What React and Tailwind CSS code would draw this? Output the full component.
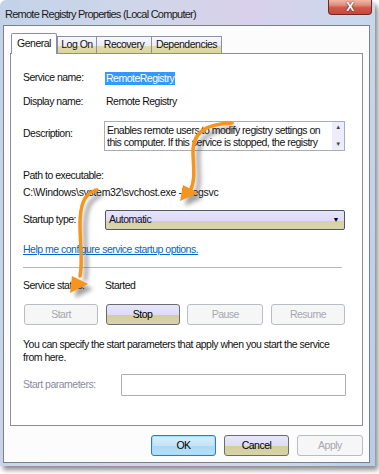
import React from 'react';

// Vista style push button
const Btn = ({ children, kind = 'normal', className = '' }) => {
  const styles = {
    disabled: 'border-[#b8bcc4] bg-[#f6f6f6] text-[#a6a6b0]',
    normal:
      'border-[#6a6a70] text-black bg-[linear-gradient(to_bottom,#e6e6fb_0%,#dcdcf7_52%,#d2ce9f_53%,#d8d4a8_100%)]',
    default:
      'border-[#3a78b0] text-black bg-[linear-gradient(to_bottom,#d8effc_0%,#c2e4f8_50%,#acd8f4_51%,#b8e0f6_100%)] shadow-[inset_0_0_0_1px_#9fe0ff]',
  };
  return (
    <div
      className={`h-[21px] flex items-center justify-center rounded-[3px] border ${styles[kind]} ${className}`}
    >
      {children}
    </div>
  );
};

const Tab = ({ children, selected, className = '' }) =>
  selected ? (
    <div
      className={`h-[21px] -mb-px relative z-10 flex items-center justify-center bg-white border border-b-0 border-[#8c8e9c] rounded-t-[2px] ${className}`}
    >
      {children}
    </div>
  ) : (
    <div
      className={`h-[17px] flex items-center justify-center border border-b-0 border-[#8e90a0] bg-[linear-gradient(to_bottom,#f7f7fd_0%,#ececf6_55%,#e2dbaa_56%,#dcd5a0_100%)] ${className}`}
    >
      {children}
    </div>
  );

const Label = ({ children, className = '' }) => (
  <div className={`w-[82px] shrink-0 ${className}`}>{children}</div>
);

const Arrows = () => (
  <svg
    className="absolute inset-0 pointer-events-none"
    width="379"
    height="474"
    viewBox="0 0 379 474"
  >
    <defs>
      <filter id="blur" x="-20%" y="-20%" width="140%" height="140%">
        <feGaussianBlur stdDeviation="2" />
      </filter>
    </defs>
    {/* shadows */}
    <g opacity="0.45" filter="url(#blur)" transform="translate(5 5)">
      <path d="M232 123 C 205 124, 192 132, 193 155 C 194 172, 195 182, 190 191" stroke="#333" strokeWidth="4" fill="none" />
      <path d="M180 201 L 183 185 L 198 193 Z" fill="#333" />
      <path d="M97 190 C 84 193, 80 205, 80 225 C 80 245, 83 262, 80 276" stroke="#333" strokeWidth="4" fill="none" />
      <path d="M70 293 L 72 276 L 88 284 Z" fill="#333" />
    </g>
    {/* arrows */}
    <g>
      <path d="M232 123 C 205 124, 192 132, 193 155 C 194 172, 195 182, 190 191" stroke="#f7941d" strokeWidth="3.5" fill="none" strokeLinecap="round" />
      <path d="M180 201 L 183 185 L 198 193 Z" fill="#f7941d" />
      <path d="M97 190 C 84 193, 80 205, 80 225 C 80 245, 83 262, 80 276" stroke="#f7941d" strokeWidth="3.5" fill="none" strokeLinecap="round" />
      <path d="M70 293 L 72 276 L 88 284 Z" fill="#f7941d" />
    </g>
  </svg>
);

const App = () => {
  return (
    <div
      className="w-[379px] h-[474px] bg-white relative overflow-hidden text-[10.5px] tracking-[-0.5px] text-[#111]"
      style={{ fontFamily: '"Liberation Sans", Arial, sans-serif' }}
    >
      {/* Window frame */}
      <div className="w-[375px] h-[466px] flex flex-col pl-[3px] pr-[5px] pb-[3px] rounded-t-[6px] bg-[linear-gradient(100deg,#c3d2e8_0%,#cfd6ea_30%,#d8d0ea_55%,#c9d8ec_80%,#b8cce8_100%)] shadow-[3px_4px_5px_rgba(0,0,0,0.45)]">
        {/* Title bar */}
        <div className="h-[25px] flex items-start justify-between">
          <div className="pt-[6px] pl-[2px] text-[11px] tracking-[-0.75px] text-[#1a1a1a]">
            Remote Registry Properties (Local Computer)
          </div>
          <div className="mr-[-2px] w-[44px] h-[15px] flex items-center justify-center rounded-b-[4px] border border-t-0 border-[#6b2a22] bg-[linear-gradient(to_bottom,#f0b8a8_0%,#e09080_35%,#d05848_55%,#c84a3c_100%)]">
            <span className="text-white font-bold text-[12px] leading-none [text-shadow:0_0_2px_#401010]">
              X
            </span>
          </div>
        </div>

        {/* Body */}
        <div className="flex-1 flex flex-col border border-[#78828e] bg-[#fcfcfd]">
          {/* Tabs */}
          <div className="flex items-end pl-[7px] pt-[7px]">
            <Tab selected className="w-[46px]">General</Tab>
            <Tab className="w-[40px]">Log On</Tab>
            <Tab className="w-[55px] border-l-0">Recovery</Tab>
            <Tab className="w-[70px] border-l-0">Dependencies</Tab>
          </div>

          {/* Tab panel */}
          <div className="ml-[6px] w-[353px] h-[373px] border border-[#8c8e9c] bg-white flex flex-col pl-[12px] pr-[16px] pt-[16px]">
            <div className="h-[16px] flex items-center">
              <Label>Service name:</Label>
              <span className="bg-[#3399ff] text-white px-[1px] leading-[13px]">RemoteRegistry</span>
            </div>
            <div className="h-[16px] mt-[8px] flex items-center">
              <Label>Display name:</Label>
              <span className="pl-[1px]">Remote Registry</span>
            </div>
            <div className="mt-[11px] flex items-start">
              <Label className="pt-[5px]">Description:</Label>
              <div className="ml-[-1px] w-[241px] h-[30px] border border-[#a9abb8] flex overflow-hidden">
                <div className="flex-1 pl-[2px] pt-[2px] leading-[12px] overflow-hidden">
                  Enables remote users to modify registry settings on this computer. If this service is stopped, the registry
                </div>
                <div className="w-[12px] flex flex-col items-center justify-between bg-[#ececfa] text-[6px] text-[#444] py-[1px]">
                  <span>▲</span>
                  <span>▼</span>
                </div>
              </div>
            </div>
            <div className="mt-[16px] leading-[17px]">
              <div>Path to executable:</div>
              <div className="tracking-[-0.3px]">C:\Windows\system32\svchost.exe -k regsvc</div>
            </div>
            <div className="mt-[9px] flex items-center">
              <Label>Startup type:</Label>
              <div className="w-[240px] h-[20px] rounded-[2px] border border-[#55565c] flex items-center justify-between pl-[3px] pr-[5px] bg-[linear-gradient(to_bottom,#e6e4fb_0%,#dcdaf8_55%,#d6d2a8_56%,#d8d4ac_100%)]">
                <span>Automatic</span>
                <span className="text-[7px] text-black">▼</span>
              </div>
            </div>
            <div className="mt-[13px] h-[14px] flex items-center">
              <span className="text-[#0066cc] underline">Help me configure service startup options.</span>
            </div>
            <div className="mt-[10px] h-px w-[319px] bg-[#b4b6c6]" />
            <div className="mt-[11px] h-[14px] flex items-center">
              <Label>Service status:</Label>
              <span>Started</span>
            </div>
            <div className="mt-[11px] w-[321px] ml-[1px] flex justify-between">
              <Btn kind="disabled" className="w-[74px]">Start</Btn>
              <Btn className="w-[74px]">Stop</Btn>
              <Btn kind="disabled" className="w-[76px]">Pause</Btn>
              <Btn kind="disabled" className="w-[74px]">Resume</Btn>
            </div>
            <div className="mt-[13px] leading-[12.5px] w-[322px]">
              You can specify the start parameters that apply when you start the service from here.
            </div>
            <div className="mt-[11px] flex items-center">
              <div className="w-[98px] shrink-0 text-[#8c8c9c]">Start parameters:</div>
              <div className="w-[225px] h-[22px] border border-[#abadb8] rounded-[1px] bg-white" />
            </div>
          </div>

          {/* Dialog buttons */}
          <div className="w-[359px] flex justify-end gap-[8px] mt-[9px]">
            <Btn kind="default" className="w-[65px] h-[20px]">OK</Btn>
            <Btn className="w-[65px] h-[20px]">Cancel</Btn>
            <Btn kind="disabled" className="w-[66px] h-[20px]">Apply</Btn>
          </div>
        </div>
      </div>

      <Arrows />
    </div>
  );
};

export default App;
